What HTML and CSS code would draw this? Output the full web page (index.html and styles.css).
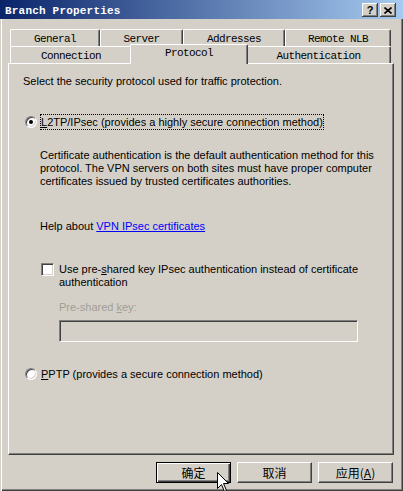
FILE: index.html
```html
<!DOCTYPE html>
<html lang="en">
<head>
    <meta charset="UTF-8">
    <title>Branch Properties</title>
    <link rel="stylesheet" href="styles.css">
</head>
<body>

<div class="window">
    <!-- Title bar -->
    <div class="titlebar">
        <span class="title">Branch Properties</span>
        <div class="title-buttons">
            <span class="tbtn">?</span>
            <span class="tbtn">
                <svg width="8" height="7" viewBox="0 0 8 7"><path d="M0.5 0.5 L7.5 6.5 M7.5 0.5 L0.5 6.5" stroke="#000" stroke-width="1.6"/></svg>
            </span>
        </div>
    </div>

    <!-- Tabs -->
    <div class="tabs">
        <div class="tab-row">
            <div class="tab w-general">General</div>
            <div class="tab w-server">Server</div>
            <div class="tab w-addresses">Addresses</div>
            <div class="tab w-nlb">Remote NLB</div>
        </div>
        <div class="tab-row">
            <div class="tab w-connection">Connection</div>
            <div class="tab active">Protocol</div>
            <div class="tab w-auth">Authentication</div>
        </div>
    </div>

    <div class="panel">
        <p class="intro">Select the security protocol used for traffic protection.</p>

        <div class="option first">
            <span class="radio checked"></span>
            <span class="option-label focused"><u>L</u>2TP/IPsec (provides a highly secure connection method)</span>
        </div>

        <p class="details">Certificate authentication is the default authentication method for this protocol. The VPN servers on both sites must have proper computer certificates issued by trusted certificates authorities.</p>

        <p class="help">Help about <a href="#">VPN IPsec certificates</a></p>

        <div class="check-row">
            <span class="checkbox"></span>
            <span class="check-label">Use pre-<u>s</u>hared key IPsec authentication instead of certificate authentication</span>
        </div>

        <p class="key-label">Pre-shared <u>k</u>ey:</p>
        <div class="key-input"></div>

        <div class="option second">
            <span class="radio"></span>
            <span class="option-label"><u>P</u>PTP (provides a secure connection method)</span>
        </div>
    </div>

    <!-- Dialog buttons -->
    <div class="buttons">
        <button class="btn default">确定</button>
        <button class="btn">取消</button>
        <button class="btn">应用(<u>A</u>)</button>
    </div>

    <!-- Mouse pointer -->
    <svg class="cursor" width="13" height="20" viewBox="0 0 13 20">
        <path d="M0.5 0.5 L0.5 16.5 L4.5 12.5 L7.5 19.5 L9.5 18.5 L6.5 11.5 L11.5 11.5 Z" fill="#fff" stroke="#000" stroke-width="1"/>
    </svg>
</div>

</body>
</html>
```

FILE: styles.css
```css
* {
    box-sizing: border-box;
}
body {
    margin: 0;
    background-color: #d4d0c8;
    font-family: "Liberation Sans", Arial, sans-serif;
    font-size: 11px;
    color: #000;
}
p {
    margin: 0;
}
.window {
    position: relative;
    width: 403px;
    height: 491px;
    background-color: #d4d0c8;
    box-shadow: inset 1px 0 #d4d0c8, inset 2px 0 #fff, inset -1px -1px #404040, inset -2px -2px #808080;
    overflow: hidden;
}

/* Title bar */
.titlebar {
    height: 19px;
    display: flex;
    align-items: center;
    justify-content: space-between;
    padding: 1px 7px 0 5px;
    background: linear-gradient(to right, #0a246a, #a6caf0);
}
.title {
    color: #fff;
    font: bold 11px "Liberation Mono", monospace;
    letter-spacing: 0.2px;
    padding-top: 2px;
}
.title-buttons {
    display: flex;
    gap: 2px;
}
.tbtn {
    width: 16px;
    height: 14px;
    display: flex;
    align-items: center;
    justify-content: center;
    background-color: #d4d0c8;
    box-shadow: inset -1px -1px #404040, inset 1px 1px #fff, inset -2px -2px #808080;
    font: bold 11px "Liberation Sans", sans-serif;
}

/* Tabs */
.tabs {
    margin: 10px 0 0 10px;
    width: 381px;
    position: relative;
    z-index: 1;
    font: 11px "Liberation Mono", monospace;
    letter-spacing: -0.6px;
}
.tab-row {
    display: flex;
    height: 17px;
}
.tab {
    height: 17px;
    padding-top: 1px;
    line-height: 16px;
    text-align: center;
    background-color: #d4d0c8;
    border-top: 1px solid #fff;
    border-left: 1px solid #fff;
    border-right: 1px solid #404040;
    box-shadow: inset -1px 0 #808080;
    border-radius: 2px 2px 0 0;
}
.w-general { width: 90px; }
.w-server { width: 83px; }
.w-addresses { width: 102px; }
.w-nlb { width: 106px; }
.w-connection { width: 122px; }
.w-auth { width: 145px; }
.tab.active {
    width: 118px;
    height: 20px;
    margin: -2px -2px 0;
    padding-top: 0;
    line-height: 17px;
    position: relative;
    z-index: 2;
}

/* Tab page */
.panel {
    margin-left: 8px;
    width: 386px;
    height: 392px;
    border: 1px solid;
    border-color: #fff #404040 #404040 #fff;
    box-shadow: inset -1px -1px #808080;
}
.intro {
    margin: 11px 0 0 14px;
    line-height: 13px;
}
.option {
    display: flex;
    align-items: center;
    height: 16px;
    margin-left: 16px;
}
.option.first {
    margin-top: 26px;
}
.option.second {
    margin-top: 24px;
}
.radio {
    position: relative;
    width: 12px;
    height: 12px;
    border-radius: 50%;
    background-color: #fff;
    border: 1px solid;
    border-color: #808080 #fff #fff #808080;
    box-shadow: inset 1px 1px #404040, inset -1px -1px #d4d0c8;
}
.radio.checked::after {
    content: "";
    position: absolute;
    left: 3px;
    top: 3px;
    width: 4px;
    height: 4px;
    border-radius: 50%;
    background-color: #000;
}
.option-label {
    margin-left: 3px;
    line-height: 14px;
    border: 1px dotted transparent;
}
.option-label.focused {
    border-color: #000;
}
.details {
    margin: 19px 0 0 31px;
    width: 345px;
    line-height: 13px;
}
.help {
    margin: 32px 0 0 31px;
    line-height: 13px;
}
.help a {
    color: #0000ff;
}
.check-row {
    display: flex;
    align-items: flex-start;
    margin: 30px 0 0 32px;
}
.checkbox {
    flex: none;
    width: 13px;
    height: 13px;
    background-color: #fff;
    border: 1px solid;
    border-color: #808080 #fff #fff #808080;
    box-shadow: inset 1px 1px #404040, inset -1px -1px #d4d0c8;
}
.check-label {
    width: 310px;
    margin-left: 5px;
    line-height: 13px;
}
.key-label {
    margin: 12px 0 0 50px;
    line-height: 13px;
    color: #a19e97;
}
.key-input {
    margin: 6px 0 0 50px;
    width: 299px;
    height: 22px;
    background-color: #d4d0c8;
    border: 1px solid;
    border-color: #808080 #fff #fff #808080;
    box-shadow: inset 1px 1px #404040, inset -1px -1px #d4d0c8;
}

/* Dialog buttons */
.buttons {
    display: flex;
    justify-content: flex-end;
    gap: 6px;
    margin-top: 7px;
    padding-right: 10px;
}
.btn {
    width: 75px;
    height: 21px;
    padding: 0;
    background-color: #d4d0c8;
    border: 1px solid;
    border-color: #fff #404040 #404040 #fff;
    box-shadow: inset -1px -1px #808080;
    font: 12px "Noto Sans CJK SC", sans-serif;
    color: #000;
}
.btn.default {
    border: 1px solid #000;
    box-shadow: inset 1px 1px #fff, inset -1px -1px #404040, inset -2px -2px #808080;
}
.btn u {
    text-decoration: underline;
}

.cursor {
    position: absolute;
    left: 217px;
    top: 472px;
}
```
